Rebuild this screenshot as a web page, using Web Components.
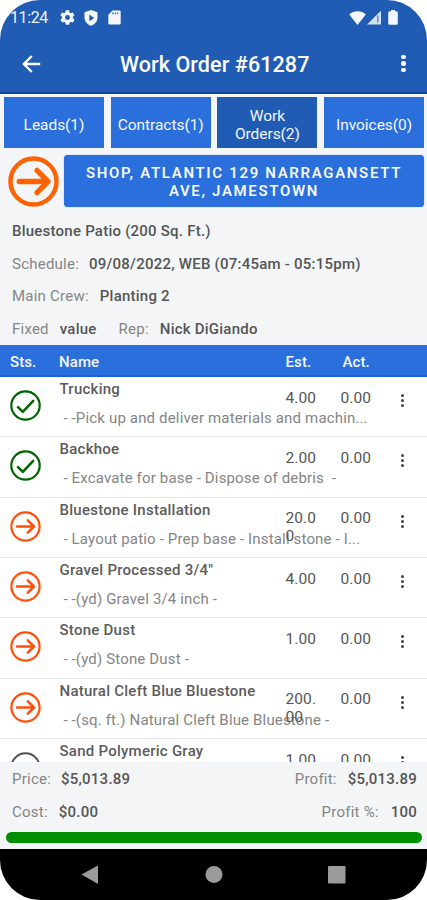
<!DOCTYPE html>
<html lang="en">
<head>
<meta charset="utf-8">
<title>Work Order #61287</title>
<style>
  body {
    margin: 0;
    background: #fff;
    font-family: Roboto, "Liberation Sans", sans-serif;
  }
</style>
</head>
<body>
<work-order-app></work-order-app>

<script>
(function() {

  function define(name, html, setup) {
    const template = document.createElement('template');
    template.innerHTML = html;

    window.customElements.define(name, class extends HTMLElement {
      constructor() {
        super();
        this.attachShadow({ mode: 'open' });
        this.shadowRoot.appendChild(template.content.cloneNode(true));
      }

      connectedCallback() {
        if (setup) setup(this, this.shadowRoot);
      }
    });
  }

  define('status-icon', `
    <style>
      :host { display: block; width: 31px; height: 31px; }
      :host([large]) { width: 51px; height: 51px; }
      svg { display: block; width: 100%; height: 100%; fill: none; stroke-linecap: round; stroke-linejoin: round; }
    </style>
    <svg viewBox="0 0 31 31"></svg>
  `, (el, root) => {
    const large = el.hasAttribute('large');
    const svg = root.querySelector('svg');
    const kind = el.getAttribute('kind');
    if (kind === 'done') {
      svg.setAttribute('stroke', '#006400');
      svg.innerHTML = '<circle cx="15.5" cy="15.5" r="14.2" stroke-width="2.2"/><path d="M8 17.2l4.8 4.6 10.4-11" stroke-width="2.5"/>';
    } else if (kind === 'next') {
      svg.setAttribute('stroke', large ? '#ff6200' : '#ff4f0a');
      svg.innerHTML = large
        ? '<circle cx="15.5" cy="15.5" r="14" stroke-width="2.7"/><path d="M6.8 15.5H24M17.6 8.7l6.8 6.8-6.8 6.8" stroke-width="3.2"/>'
        : '<circle cx="15.5" cy="15.5" r="14.1" stroke-width="2.2"/><path d="M7 15.5h17M17.8 9.3l6.2 6.2-6.2 6.2" stroke-width="2.5"/>';
    } else {
      svg.setAttribute('stroke', '#555');
      svg.innerHTML = '<circle cx="15.5" cy="15.5" r="14.2" stroke-width="2"/>';
    }
  });

  define('more-dots', `
    <style>
      :host { display: flex; flex-direction: column; align-items: center; gap: var(--gap, 2px); color: #444; }
      i { width: var(--dot, 3px); height: var(--dot, 3px); border-radius: 50%; background: currentColor; }
    </style>
    <i></i><i></i><i></i>
  `);

  define('status-bar', `
    <style>
      :host { display: flex; align-items: center; height: 35px; padding: 0 29px 0 10px; color: #eef3fc; font-size: 16px; box-sizing: border-box; }
      svg { display: block; fill: #f4f7fd; }
      span { letter-spacing: -.4px; width: 49.5px; line-height: 35px; }
      .gear { margin-right: 9px; }
      .shield { margin-right: 10px; }
      .wifi { margin-left: auto; }
      .battery { margin-left: 6px; }
    </style>
    <span>11:24</span>
    <svg class="gear" width="15" height="15" viewBox="2 2 20 20"><path fill-rule="evenodd" d="M19.1 12.9a7 7 0 0 0 0-1.8l2-1.6c.2-.2.3-.4.1-.6l-1.9-3.3c-.1-.2-.4-.3-.6-.2l-2.4 1a7 7 0 0 0-1.6-1l-.4-2.5c0-.2-.2-.4-.5-.4h-3.8c-.2 0-.4.2-.5.4l-.4 2.5a7 7 0 0 0-1.6 1l-2.4-1c-.2-.1-.5 0-.6.2L2.7 8.9c-.1.2-.1.5.1.6l2 1.6a7 7 0 0 0 0 1.8l-2 1.6c-.2.2-.2.4-.1.6l1.900 3.300c.1.200.4.300.6.200l2.400-1a7 7 0 0 0 1.600 1l.4 2.500c0 .2.200.4.500.4h3.800c.2 0 .4-.2.500-.4l.4-2.500a7 7 0 0 0 1.600-1l2.400 1c.2.100.5 0 .6-.2l1.900-3.300c.1-.2.100-.5-.1-.6zM12 15.300a3.300 3.300 0 1 1 0-6.600 3.300 3.300 0 0 1 0 6.600z"/></svg>
    <svg class="shield" width="14" height="16" viewBox="0 0 14 16"><path fill-rule="evenodd" d="M7 0l6.500 2.300v5.200c0 3.800-2.700 7-6.500 8.300C3.200 14.500.5 11.300.5 7.500V2.300zM5.300 4.500v6.800l5-3.400z"/></svg>
    <svg width="13" height="15" viewBox="0 0 13 15"><path fill-rule="evenodd" d="M4.500.5h7a1.200 1.200 0 0 1 1.200 1.200v11.600a1.200 1.200 0 0 1-1.200 1.200h-10A1.200 1.200 0 0 1 .3 13.300V4.700zM4.300 2.600v1.600h1.200V2.600zM6.700 2.600v1.600h1.200V2.600zM9.100 2.600v1.600h1.200V2.600z"/></svg>
    <svg class="wifi" width="17" height="14" viewBox="0 0 17 14"><path d="M8.500 14L.2 3.500C4.700-.9 12.300-.9 16.800 3.500z"/></svg>
    <svg width="16" height="15" viewBox="0 0 16 15"><path fill-opacity=".85" d="M1 14.500L15 .8v13.700z"/><path fill="#5f8bd0" d="M11 5.500h1.500v7H11z"/></svg>
    <svg class="battery" width="10" height="15" viewBox="0 0 10 15"><path d="M3 0h4v1.200h1.300A1.500 1.500 0 0 1 9.800 2.700v10.600a1.500 1.500 0 0 1-1.500 1.500H1.700a1.500 1.500 0 0 1-1.500-1.500V2.700a1.500 1.500 0 0 1 1.500-1.500H3z"/></svg>
  `);

  define('app-bar', `
    <style>
      :host { display: flex; align-items: center; height: 59px; padding: 0 21px 0 22px; border-bottom: 2px solid #0c469e; box-sizing: border-box; color: #fff; }
      svg { display: block; margin-right: 79px; }
      h1 { margin: 0; padding-top: 2px; font-size: 21.5px; font-weight: 500; letter-spacing: .1px; white-space: nowrap; flex: 1; }
      more-dots { color: #fff; --dot: 4.6px; --gap: 1.8px; }
    </style>
    <svg width="19" height="18" viewBox="0 0 19 18" fill="none" stroke="#fff" stroke-width="2.3"><path d="M18.2 9H2M9.8 1L1.8 9l8 8"/></svg>
    <h1><slot></slot></h1>
    <more-dots></more-dots>
  `);

  define('nav-tab', `
    <style>
      :host { display: flex; align-items: center; justify-content: center; text-align: center; height: 51px; background: #2a6fdb; color: #f3f7ff; font-size: 15.5px; line-height: 18px; letter-spacing: -.05px; box-sizing: border-box; padding-top: 4px; }
      :host([active]) { background: #215cb4; }
    </style>
    <span><slot></slot></span>
  `);

  define('info-line', `
    <style>
      :host { display: flex; height: 32.8px; align-items: center; font-size: 15px; letter-spacing: .23px; color: #858585; white-space: pre; }
      ::slotted(b) { font-weight: 500; color: #555; }
    </style>
    <slot></slot>
  `);

  define('order-row', `
    <style>
      :host { display: grid; grid-template-columns: 49.5px 226px 55px 48px 1fr; height: 60.35px; padding-left: 10px; box-sizing: border-box; border-bottom: 1.5px solid #e6e7e9; flex: none; }
      .icon { padding-top: 13px; }
      .text { width: 312px; }
      .name, .note { white-space: pre; font-size: 15px; line-height: 18px; }
      .name { font-weight: 500; color: #5c5c5c; margin-top: 3px; letter-spacing: .25px; }
      .note { color: #858585; margin-top: 11px; letter-spacing: .16px; }
      .num { font-size: 15.5px; color: #555; line-height: 18px; padding-top: 11.5px; width: 31px; letter-spacing: .1px; }
      more-dots { padding-top: 17px; width: 28px; --dot: 3px; --gap: 2px; }
    </style>
    <div class="icon"></div>
    <div class="text">
      <div class="name"></div>
      <div class="note"><slot></slot></div>
    </div>
    <div class="num est"></div>
    <div class="num act"></div>
    <more-dots></more-dots>
  `, (el, root) => {
    const status = el.getAttribute('status');
    root.querySelector('.icon').innerHTML = `<status-icon kind="${status}"></status-icon>`;
    root.querySelector('.name').textContent = el.getAttribute('name');
    root.querySelector('.est').innerHTML = el.getAttribute('est').replace('|', '<br>');
    root.querySelector('.act').textContent = '0.00';
  });

  define('order-table', `
    <style>
      :host { display: flex; flex-direction: column; height: 417px; overflow: hidden; background: #fff; }
      header { display: grid; grid-template-columns: 49px 226.5px 57px 1fr; height: 32px; flex: none; padding: 3px 0 0 10px; box-sizing: border-box; background: #2a6fdb; border-bottom: 2px solid #1763d2; align-items: center; color: #f3f7ff; font-size: 15px; font-weight: 500; letter-spacing: .1px; }
    </style>
    <header><span>Sts.</span><span>Name</span><span>Est.</span><span>Act.</span></header>
    <slot></slot>
  `);

  define('nav-buttons', `
    <style>
      :host { display: block; height: 51px; background: #000; }
      svg { display: block; }
    </style>
    <svg width="427" height="51" fill="#9b9b9b"><path d="M81.5 25.5L98 16.5v18.500z"/><circle cx="214" cy="25.5" r="8.500"/><rect x="328" y="17" width="17.500" height="17.500" rx="1"/></svg>
  `);

  define('work-order-app', `
    <style>
      :host { display: flex; flex-direction: column; width: 427px; height: 900px; overflow: hidden; border-radius: 40px; background: #f3f5f7; }
      .top { background: #215cb4; flex: none; }
      .tabs { display: grid; grid-template-columns: repeat(4, 100px); gap: 6.7px; padding: 3px 0 0 4px; }
      .place { display: flex; align-items: center; gap: 5px; padding: 7px 3px 0 8px; }
      .address { flex: 1; height: 52px; box-sizing: border-box; padding-top: 9px; border-radius: 4px; background: #2a6fdb; box-shadow: 0 0 1px #2a6fdb; color: #f3f7ff; font-size: 15px; font-weight: 600; line-height: 18px; letter-spacing: 1.66px; text-align: center; white-space: nowrap; }
      .info { height: 138px; box-sizing: border-box; padding: 7.5px 12px 0; }
      .totals { height: 70px; box-sizing: border-box; padding: 1px 10px 0 12px; }
      .totals info-line { justify-content: space-between; }
      .totals b { font-weight: 500; color: #555; }
      .progress { height: 11px; margin: 0 5px 6px 6px; border-radius: 6px; background: #008f00; flex: none; }
    </style>
    <div class="top">
      <status-bar></status-bar>
      <app-bar>Work Order #61287</app-bar>
    </div>
    <div class="tabs">
      <nav-tab>Leads(1)</nav-tab>
      <nav-tab>Contracts(1)</nav-tab>
      <nav-tab active>Work<br>Orders(2)</nav-tab>
      <nav-tab>Invoices(0)</nav-tab>
    </div>
    <div class="place">
      <status-icon kind="next" large></status-icon>
      <div class="address">SHOP, ATLANTIC 129 NARRAGANSETT<br>AVE, JAMESTOWN</div>
    </div>
    <div class="info">
      <info-line><b>Bluestone Patio (200 Sq. Ft.)</b></info-line>
      <info-line><span>Schedule:</span><b style="margin-left:10px">09/08/2022, WEB (07:45am - 05:15pm)</b></info-line>
      <info-line><span>Main Crew:</span><b style="margin-left:11px">Planting 2</b></info-line>
      <info-line><span>Fixed</span><b style="margin-left:11px">value</b><span style="margin-left:22px">Rep:</span><b style="margin-left:11px">Nick DiGiando</b></info-line>
    </div>
    <order-table>
      <order-row status="done" name="Trucking" est="4.00"> - -Pick up and deliver materials and machin...</order-row>
      <order-row status="done" name="Backhoe" est="2.00"> - Excavate for base - Dispose of debris  -</order-row>
      <order-row status="next" name="Bluestone Installation" est="20.0|0"> - Layout patio - Prep base - Install stone - I...</order-row>
      <order-row status="next" name="Gravel Processed 3/4&quot;" est="4.00"> - -(yd) Gravel 3/4 inch -</order-row>
      <order-row status="next" name="Stone Dust" est="1.00"> - -(yd) Stone Dust -</order-row>
      <order-row status="next" name="Natural Cleft Blue Bluestone" est="200.|00"> - -(sq. ft.) Natural Cleft Blue Bluestone -</order-row>
      <order-row status="open" name="Sand Polymeric Gray" est="1.00"></order-row>
    </order-table>
    <div class="totals">
      <info-line><span>Price:<b style="margin-left:10px">$5,013.89</b></span><span>Profit:<b style="margin-left:11px">$5,013.89</b></span></info-line>
      <info-line><span>Cost:<b style="margin-left:11px">$0.00</b></span><span>Profit %:<b style="margin-left:12px">100</b></span></info-line>
    </div>
    <div class="progress"></div>
    <nav-buttons></nav-buttons>
  `);
})();
</script>
</body>
</html>
